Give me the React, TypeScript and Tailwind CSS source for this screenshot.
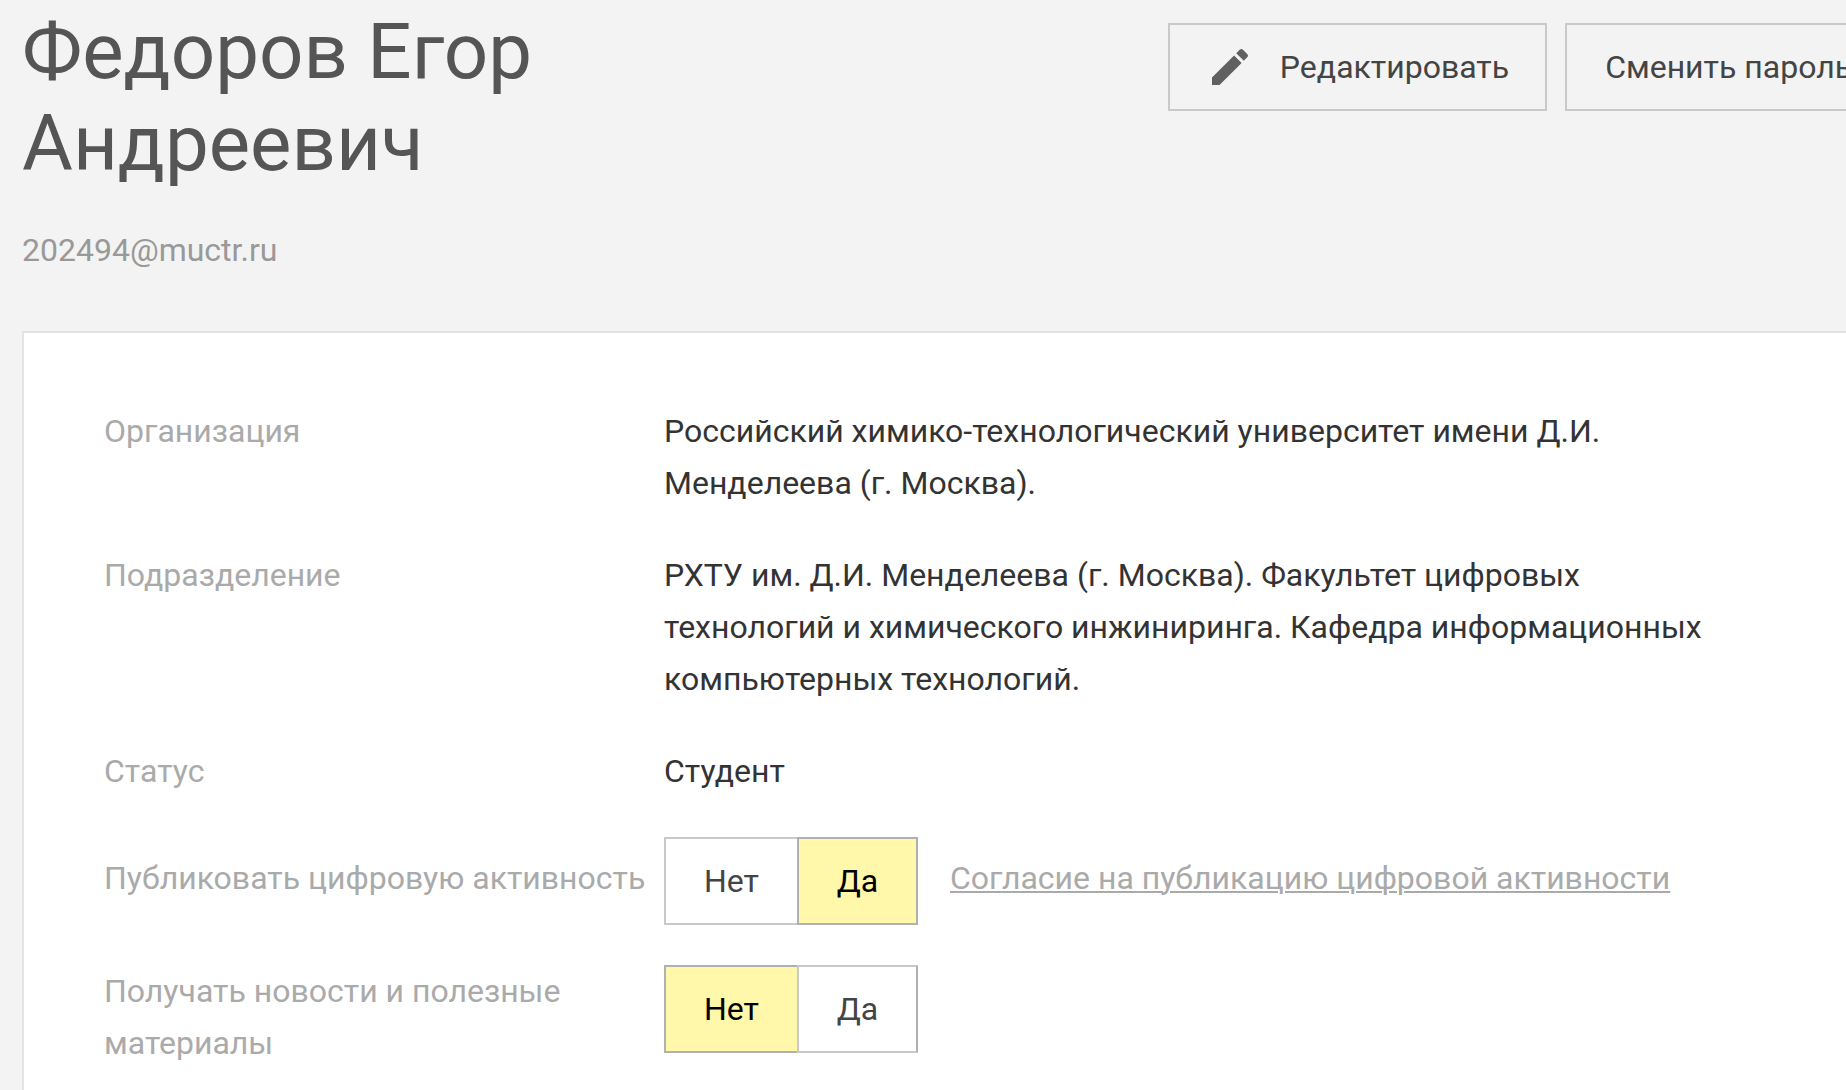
import { useState } from 'react';
import type { ReactNode } from 'react';

interface RowProps {
  label: string;
  children: ReactNode;
  labelClass?: string;
}

function Row({ label, children, labelClass = '' }: RowProps) {
  return (
    <div className="mb-10 flex items-start">
      <div className={`w-[560px] shrink-0 text-[#aaa] ${labelClass}`}>{label}</div>
      <div className="min-w-0 flex-1">{children}</div>
    </div>
  );
}

interface ToggleProps {
  label: string;
  initial: boolean;
}

function Toggle({ label, initial }: ToggleProps) {
  const [value, setValue] = useState(initial);
  const on = 'bg-[#fff7aa] text-black border-[#b0b0b0]';
  const off = 'bg-white text-[#444] border-[#c9c9c9]';

  return (
    <div role="group" aria-label={label} className="flex">
      <button
        type="button"
        aria-pressed={!value}
        onClick={() => setValue(false)}
        className={`h-[88px] w-[135px] border-2 ${value ? off : on}`}
      >
        Нет
      </button>
      <button
        type="button"
        aria-pressed={value}
        onClick={() => setValue(true)}
        className={`-ml-0.5 h-[88px] w-[121px] border-2 border-r-[#b0b0b0] ${value ? on : off}`}
      >
        Да
      </button>
    </div>
  );
}

export default function App() {
  return (
    <div className="flex min-h-screen flex-col overflow-hidden bg-[#f3f3f3] pl-[22px] font-[Roboto,sans-serif] text-[32px] leading-[52px] text-[#333]">
      <header className="flex items-start justify-between">
        <div className="pt-1.5">
          <h1 className="w-[640px] text-[78px] leading-[92px] text-[#555]">Федоров Егор Андреевич</h1>
          <p className="mt-[34px] text-[#999]">202494@muctr.ru</p>
        </div>
        {/* Actions run past the right edge of the window */}
        <div className="-mr-[46px] flex shrink-0 gap-[18px] pt-[23px]">
          <button type="button" className="flex h-[88px] items-center border-2 border-[#c9c9c9] px-9 text-[#444]">
            <svg viewBox="0 0 24 24" className="mr-[26px] size-12 fill-[#606060]" aria-hidden="true">
              <path d="M3 17.25V21h3.75L17.81 9.94l-3.75-3.75L3 17.25zM20.71 7.04a1 1 0 0 0 0-1.41l-2.34-2.34a1 1 0 0 0-1.41 0l-1.83 1.83 3.75 3.75 1.83-1.83z" />
            </svg>
            Редактировать
          </button>
          <button type="button" className="h-[88px] border-2 border-[#c9c9c9] px-[38px] whitespace-nowrap text-[#444]">
            Сменить пароль
          </button>
        </div>
      </header>

      <main className="mt-[55px] flex-1 border-t-2 border-l-2 border-[#e3e3e3] bg-white pt-[72px] pr-[100px] pl-20">
        <Row label="Организация">Российский химико-технологический университет имени Д.И. Менделеева (г. Москва).</Row>
        <Row label="Подразделение">
          РХТУ им. Д.И. Менделеева (г. Москва). Факультет цифровых технологий и химического инжиниринга. Кафедра
          информационных компьютерных технологий.
        </Row>
        <Row label="Статус">Студент</Row>
        <Row label="Публиковать цифровую активность" labelClass="pt-[15px]">
          <div className="flex items-start gap-8">
            <Toggle label="Публиковать цифровую активность" initial={true} />
            <a href="#consent" className="pt-[15px] text-[#aaa] underline decoration-2 underline-offset-2">
              Согласие на публикацию цифровой активности
            </a>
          </div>
        </Row>
        <Row label="Получать новости и полезные материалы">
          <Toggle label="Получать новости и полезные материалы" initial={false} />
        </Row>
      </main>
    </div>
  );
}
